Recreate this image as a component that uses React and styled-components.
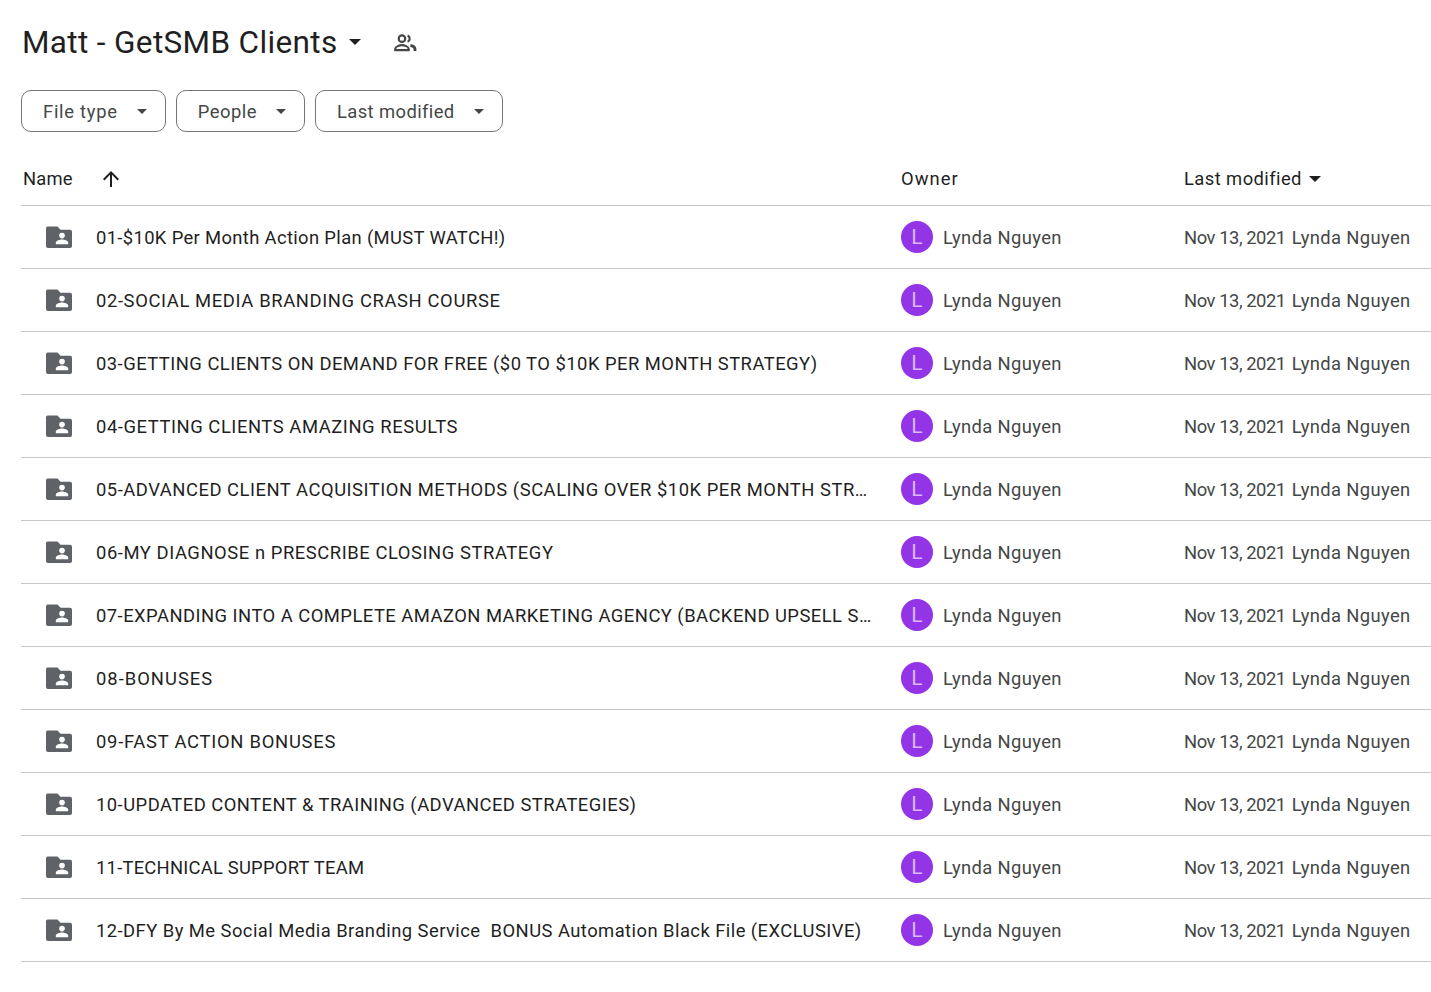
import React from "react";
import styled, { createGlobalStyle } from "styled-components";

const Global = createGlobalStyle`
  html, body { margin: 0; padding: 0; background: #fff; }
  body { font-family: Roboto, "Liberation Sans", sans-serif; color: #1f1f1f; }
`;

const Page = styled.div`
  width: 1431px;
  height: 992px;
  overflow: hidden;
  padding-left: 21px;
  box-sizing: border-box;
`;

const TitleBar = styled.div`
  display: flex;
  align-items: center;
  height: 84px;
`;

const Title = styled.h1`
  margin: 0 0 0 1px;
  font-size: 31.5px;
  font-weight: 400;
  letter-spacing: 0.35px;
  color: #1f1f1f;
  white-space: nowrap;
`;

const TitleCaret = styled.span`
  width: 0;
  height: 0;
  margin-left: 11px;
  border-left: 6.5px solid transparent;
  border-right: 6.5px solid transparent;
  border-top: 6.5px solid #1f1f1f;
`;

const ShareIcon = styled.svg`
  width: 26px;
  height: 26px;
  margin: 2px 0 0 31px;
  fill: none;
  stroke: #444746;
  stroke-width: 2;
`;

const Filters = styled.div`
  display: flex;
  gap: 10px;
  margin-top: 6px;
`;

const Chip = styled.div`
  display: flex;
  align-items: center;
  height: 42px;
  box-sizing: border-box;
  padding: 0 18px 0 21px;
  border: 1px solid #747775;
  border-radius: 10px;
  font-size: 18.4px;
  font-weight: 400;
  letter-spacing: ${(p) => p.$tracking}px;
  color: #444746;
  white-space: nowrap;
`;

const ChipCaret = styled.span`
  width: 0;
  height: 0;
  margin-left: 19px;
  border-left: 5px solid transparent;
  border-right: 5px solid transparent;
  border-top: 5px solid #444746;
`;

const Columns = styled.div`
  display: grid;
  grid-template-columns: 880px 283px 1fr;
  align-items: center;
`;

const Header = styled(Columns)`
  height: 53px;
  padding-top: 20px;
  border-bottom: 1px solid #c7c7c7;
  font-size: 18.4px;
  font-weight: 400;
  color: #1f1f1f;
`;

const HeadLabel = styled.span`
  letter-spacing: ${(p) => p.$tracking}px;
`;

const NameHead = styled.div`
  display: flex;
  align-items: center;
  padding-left: 2px;
`;

const SortArrow = styled.svg`
  width: 24px;
  height: 24px;
  margin-left: 26px;
  fill: #1f1f1f;
`;

const ModifiedHead = styled.div`
  display: flex;
  align-items: center;
`;

const HeadCaret = styled.span`
  width: 0;
  height: 0;
  margin-left: 7px;
  border-left: 6.5px solid transparent;
  border-right: 6.5px solid transparent;
  border-top: 6.5px solid #1f1f1f;
`;

const Row = styled(Columns)`
  height: 63px;
  box-sizing: border-box;
  border-bottom: 1px solid #c7c7c7;
`;

const NameCell = styled.div`
  display: flex;
  align-items: center;
  padding-left: 24px;
  min-width: 0;
`;

const FolderIcon = styled.svg`
  flex: none;
  width: 28px;
  height: 28px;
  margin-right: 23px;
`;

const FileName = styled.span`
  font-size: 18.4px;
  font-weight: 400;
  letter-spacing: ${(p) => p.$tracking}px;
  color: #1f1f1f;
  white-space: pre;
`;

const OwnerCell = styled.div`
  display: flex;
  align-items: center;
  gap: 10px;
`;

const Avatar = styled.div`
  width: 32px;
  height: 32px;
  border-radius: 50%;
  background: #9334e6;
  color: #d9b8f7;
  font-size: 21px;
  display: flex;
  align-items: center;
  justify-content: center;
`;

const MutedText = styled.span`
  font-size: 18.4px;
  letter-spacing: 0.35px;
  color: #444746;
  white-space: nowrap;
`;

const ModifiedCell = styled.div`
  display: flex;
  gap: 6px;
`;

const DateText = styled(MutedText)`
  letter-spacing: -0.45px;
`;

const folders = [
  ["01-$10K Per Month Action Plan (MUST WATCH!)", 0.35],
  ["02-SOCIAL MEDIA BRANDING CRASH COURSE", 0.62],
  ["03-GETTING CLIENTS ON DEMAND FOR FREE ($0 TO $10K PER MONTH STRATEGY)", 0.47],
  ["04-GETTING CLIENTS AMAZING RESULTS", 0.56],
  ["05-ADVANCED CLIENT ACQUISITION METHODS (SCALING OVER $10K PER MONTH STR…", 0.52],
  ["06-MY DIAGNOSE n PRESCRIBE CLOSING STRATEGY", 0.56],
  ["07-EXPANDING INTO A COMPLETE AMAZON MARKETING AGENCY (BACKEND UPSELL S…", 0.47],
  ["08-BONUSES", 1.0],
  ["09-FAST ACTION BONUSES", 0.74],
  ["10-UPDATED CONTENT & TRAINING (ADVANCED STRATEGIES)", 0.47],
  ["11-TECHNICAL SUPPORT TEAM", 0.23],
  ["12-DFY By Me Social Media Branding Service  BONUS Automation Black File (EXCLUSIVE)", 0.45],
];

const Folder = () => (
  <FolderIcon viewBox="0 0 28 28">
    <path
      fill="#5f6368"
      d="M3.5 3.5h9l3 3.2h9.5a2 2 0 0 1 2 2V23a2 2 0 0 1-2 2H3a2 2 0 0 1-2-2V5.5a2 2 0 0 1 2.5-2z"
    />
    <circle cx="17" cy="12.6" r="2.8" fill="#fff" />
    <path fill="#fff" d="M10.8 21.2v-1.4c0-2 4.2-3.2 6.2-3.2s6.2 1.2 6.2 3.2v1.4z" />
  </FolderIcon>
);

export default function App() {
  return (
    <Page>
      <Global />
      <TitleBar>
        <Title>Matt - GetSMB Clients</Title>
        <TitleCaret />
        <ShareIcon viewBox="0 0 24 24">
          <circle cx="9.2" cy="8" r="3" />
          <path d="M3 18.6v-1.2c0-2.2 4-3.4 6.2-3.4s6.2 1.2 6.2 3.4v1.2z" />
          <path d="M14.4 5.2a3 3 0 0 1 0 5.6" />
          <path d="M17 14.2c2.2.5 4.2 1.4 4.2 3.2v1.9" strokeWidth="2.6" />
        </ShareIcon>
      </TitleBar>
      <Filters>
        <Chip $tracking={0.72}>File type<ChipCaret /></Chip>
        <Chip $tracking={0.5}>People<ChipCaret /></Chip>
        <Chip $tracking={0.4}>Last modified<ChipCaret /></Chip>
      </Filters>
      <Header>
        <NameHead>
          <HeadLabel $tracking={0.2}>Name</HeadLabel>
          <SortArrow viewBox="0 0 24 24">
            <path d="M4 12l1.41 1.41L11 7.83V20h2V7.83l5.58 5.59L20 12l-8-8-8 8z" />
          </SortArrow>
        </NameHead>
        <div><HeadLabel $tracking={1}>Owner</HeadLabel></div>
        <ModifiedHead><HeadLabel $tracking={0.42}>Last modified</HeadLabel><HeadCaret /></ModifiedHead>
      </Header>
      {folders.map(([name, tracking]) => (
        <Row key={name}>
          <NameCell>
            <Folder />
            <FileName $tracking={tracking}>{name}</FileName>
          </NameCell>
          <OwnerCell>
            <Avatar>L</Avatar>
            <MutedText>Lynda Nguyen</MutedText>
          </OwnerCell>
          <ModifiedCell>
            <DateText>Nov 13, 2021</DateText>
            <MutedText>Lynda Nguyen</MutedText>
          </ModifiedCell>
        </Row>
      ))}
    </Page>
  );
}
